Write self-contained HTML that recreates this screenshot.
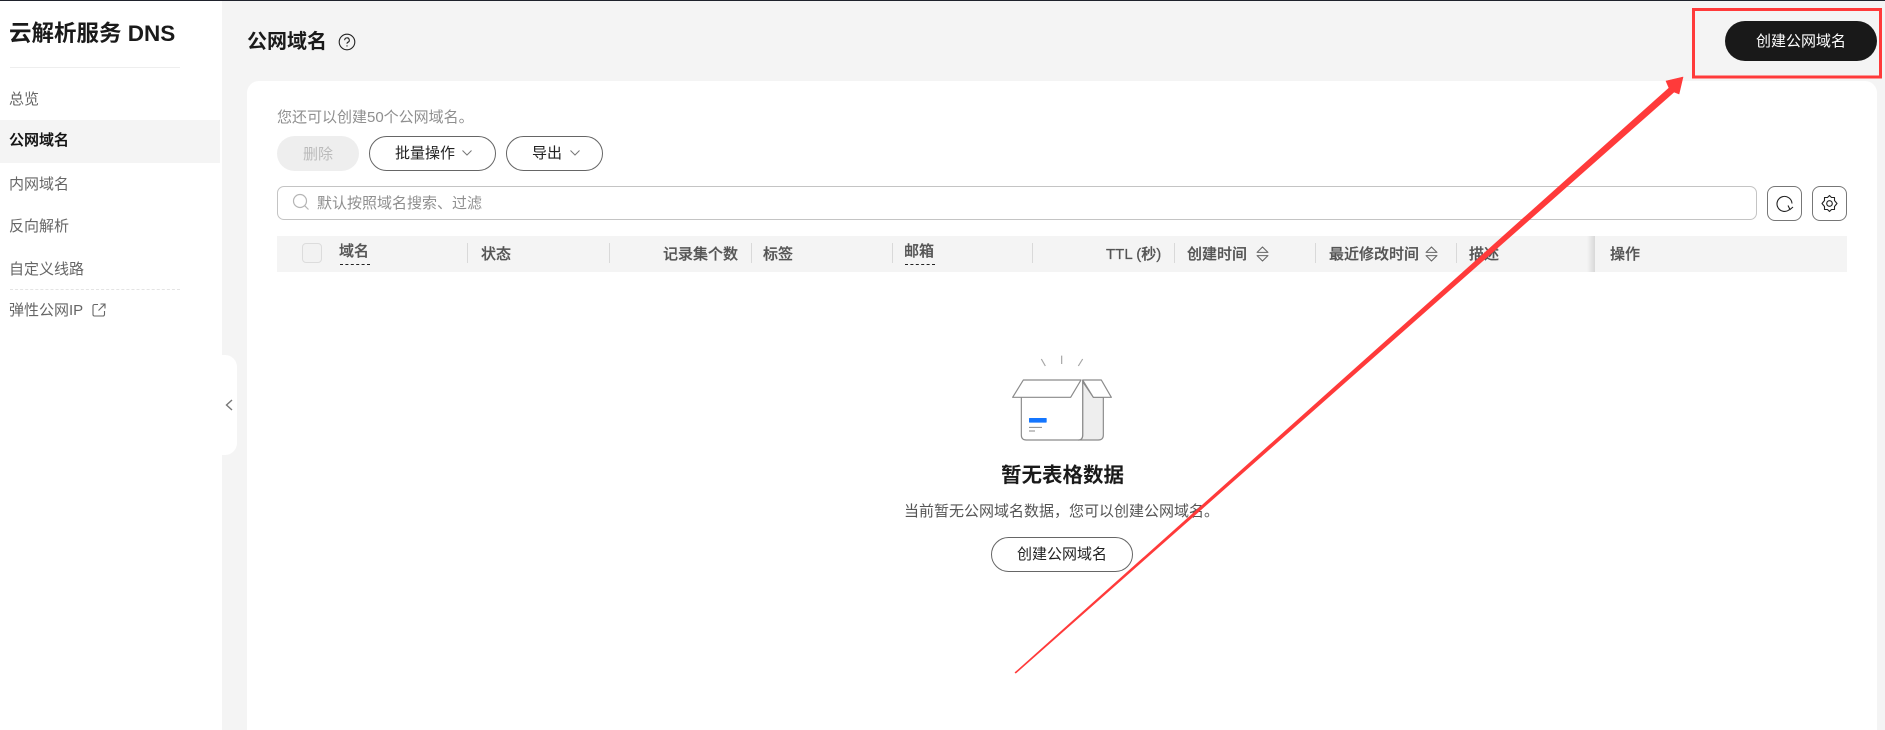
<!DOCTYPE html>
<html lang="zh-CN"><head><meta charset="utf-8"><title>云解析服务 DNS</title>
<style>
*{box-sizing:border-box;margin:0;padding:0}
html,body{width:1885px;height:730px;overflow:hidden;background:#f4f4f4}
body{position:relative;font-family:"Liberation Sans","Noto Sans CJK SC",sans-serif;font-size:15px;color:#222}
.a,.t{position:absolute}
.t{white-space:nowrap;line-height:20px;height:20px}
.nav{color:#666;left:9px}
.th{color:#555;font-weight:500;top:245px;-webkit-text-stroke:.25px #555}
.sep{position:absolute;top:243px;width:1px;height:20px;background:#d9d9d9}
.btn{position:absolute;border:1px solid #666;border-radius:18px;background:#fff;height:35px;line-height:34px;color:#222}
svg{position:absolute;overflow:visible}
</style></head><body>
<div class="a" style="left:0;top:0;width:1885px;height:1px;background:#1f222c;z-index:5"></div>
<div class="a" style="left:0;top:0;width:222px;height:730px;background:#fff"></div>
<div class="t" style="left:9px;top:21px;height:26px;line-height:26px;font-size:22.500px;font-weight:700;color:#1a1a1a">云解析服务 DNS</div>
<div class="a" style="left:10px;top:67px;width:170px;height:1px;background:#eee"></div>
<div class="t nav" style="top:90px">总览</div>
<div class="a" style="left:0;top:120px;width:220px;height:43px;background:#f4f4f4"></div>
<div class="t nav" style="top:131px;color:#111;font-weight:500;-webkit-text-stroke:.25px #111">公网域名</div>
<div class="t nav" style="top:175px">内网域名</div>
<div class="t nav" style="top:217px">反向解析</div>
<div class="t nav" style="top:260px">自定义线路</div>
<div class="a" style="left:10px;top:289px;width:170px;border-top:1px dashed #e4e4e4"></div>
<div class="t nav" style="top:301px">弹性公网IP</div>
<svg style="left:92px;top:303px" width="14" height="14" viewBox="0 0 14 14" fill="none" stroke="#666" stroke-width="1.100"><path d="M6 1.500H2.500A1.500 1.500 0 0 0 1 3v8.500A1.500 1.500 0 0 0 2.500 13H11a1.500 1.500 0 0 0 1.500-1.500V8M8.500 1H13V5.500M13 1L6.500 7.500"/></svg>
<div class="a" style="left:222px;top:355px;width:15px;height:100px;background:#fff;border-radius:0 12px 12px 0"></div>
<svg style="left:225px;top:399px" width="8" height="12" viewBox="0 0 8 12" fill="none" stroke="#777" stroke-width="1.400"><path d="M7 1L1.500 6L7 11"/></svg>

<div class="t" style="left:247px;top:30px;height:24px;line-height:24px;font-size:20px;font-weight:700;color:#1a1a1a">公网域名</div>
<svg style="left:338px;top:33px" width="18" height="18" viewBox="0 0 18 18" fill="none" stroke="#222" stroke-width="1.100"><circle cx="9" cy="9" r="7.800"/><path d="M6.700 7.200A2.300 2.300 0 1 1 9.800 9.300C9.200 9.600 9 10 9 10.800"/><path d="M9 12.300v1.200"/></svg>

<div class="a" style="left:1725px;top:21px;width:152px;height:40px;border-radius:20px;background:#191919;color:#fff;text-align:center;line-height:41px">创建公网域名</div>

<div class="a" style="left:247px;top:81px;width:1630px;height:660px;background:#fff;border-radius:12px 12px 0 0"></div>
<div class="t" style="left:277px;top:108px;color:#8f8f8f">您还可以创建50个公网域名。</div>
<div class="a" style="left:277px;top:136px;width:82px;height:35px;border-radius:18px;background:#eee;color:#bbb;text-align:center;line-height:37px">删除</div>
<div class="btn" style="left:369px;top:136px;width:127px;padding-left:25px">批量操作</div>
<svg style="left:462px;top:150px" width="10" height="6" viewBox="0 0 10 6" fill="none" stroke="#777"><path d="M.5.500L5 5L9.500.500"/></svg>
<div class="btn" style="left:506px;top:136px;width:97px;padding-left:25px">导出</div>
<svg style="left:570px;top:150px" width="10" height="6" viewBox="0 0 10 6" fill="none" stroke="#777"><path d="M.5.500L5 5L9.500.500"/></svg>

<div class="a" style="left:277px;top:186px;width:1480px;height:34px;border:1px solid #c4c4c4;border-radius:7px;background:#fff"></div>
<svg style="left:292px;top:193px" width="18" height="18" viewBox="0 0 18 18" fill="none" stroke="#b5b5b5" stroke-width="1.200"><circle cx="8" cy="8" r="6.500"/><path d="M12.800 12.800L16.500 16.500"/></svg>
<div class="t" style="left:317px;top:194px;color:#8f8f8f">默认按照域名搜索、过滤</div>
<div class="a" style="left:1767px;top:186px;width:35px;height:35px;border:1px solid #777;border-radius:8px;background:#fff"></div>
<svg style="left:1775px;top:194px" width="19" height="19" viewBox="0 0 19 19" fill="none" stroke="#222" stroke-width="1.100"><path d="M14.500 15.500A7.500 7.500 0 1 1 17 9.500"/><path d="M13 11.500L15 15.500L18 13"/></svg>
<div class="a" style="left:1812px;top:186px;width:35px;height:35px;border:1px solid #777;border-radius:8px;background:#fff"></div>
<svg style="left:1820px;top:194px" width="19" height="19" viewBox="0 0 19 19" fill="none" stroke="#222" stroke-width="1.100"><path d="M9.500 1.500L11.500 3.500H14.500V6.500L17 9.500L14.500 12.500V15.500H11.500L9.500 17.500L7.500 15.500H4.500V12.500L2 9.500L4.500 6.500V3.500H7.500Z" stroke-linejoin="round"/><circle cx="9.500" cy="9.500" r="2.800"/></svg>

<div class="a" style="left:277px;top:236px;width:1570px;height:36px;background:#f4f4f4"></div>
<div class="a" style="left:302px;top:243px;width:20px;height:20px;border:1px solid #dcdcdc;border-radius:4px;background:#f2f2f2"></div>
<div class="t th" style="left:339px;top:242px">域名</div>
<div class="a" style="left:340px;top:264px;width:30px;border-top:1px dashed #222"></div>
<div class="sep" style="left:467px"></div>
<div class="t th" style="left:481px">状态</div>
<div class="sep" style="left:609px"></div>
<div class="t th" style="left:663px">记录集个数</div>
<div class="sep" style="left:751px"></div>
<div class="t th" style="left:763px">标签</div>
<div class="sep" style="left:892px"></div>
<div class="t th" style="left:904px;top:242px">邮箱</div>
<div class="a" style="left:905px;top:264px;width:30px;border-top:1px dashed #222"></div>
<div class="sep" style="left:1032px"></div>
<div class="t th" style="left:1106px">TTL (秒)</div>
<div class="sep" style="left:1174px"></div>
<div class="t th" style="left:1187px">创建时间</div>
<svg style="left:1256px;top:245px" width="13" height="18" viewBox="0 0 12 16" fill="none" stroke="#666"><path d="M1 6.500L6 1.500L11 6.500ZM1 9.500L6 14.500L11 9.500Z" stroke-linejoin="round"/></svg>
<div class="sep" style="left:1315px"></div>
<div class="t th" style="left:1329px">最近修改时间</div>
<svg style="left:1425px;top:245px" width="13" height="18" viewBox="0 0 12 16" fill="none" stroke="#666"><path d="M1 6.500L6 1.500L11 6.500ZM1 9.500L6 14.500L11 9.500Z" stroke-linejoin="round"/></svg>
<div class="sep" style="left:1456px"></div>
<div class="t th" style="left:1469px">描述</div>
<div class="a" style="left:1587px;top:236px;width:8px;height:36px;background:linear-gradient(90deg,#f4f4f4,#d8d8d8)"></div>
<div class="t th" style="left:1610px">操作</div>

<svg style="left:980px;top:340px" width="160" height="120" viewBox="0 0 480 360" fill="none" stroke="#8a8a8a" stroke-width="3.500" stroke-linejoin="round">
<path d="M184 57L196 78M245 47V72M308 57L295 78" stroke="#a5a5a5"/>
<path d="M308 125L340 172H370V285Q370 300 355 300H295Q308 300 308 285Z" fill="#eee"/>
<path d="M124 172V285Q124 300 139 300H295Q308 300 308 285V120" fill="#fff"/>
<path d="M130 120H303L272 172H98Z" fill="#fff"/>
<path d="M308 120H364L394 172H340Z" fill="#fff"/>
<rect x="147" y="234" width="53" height="14" rx="2" fill="#1476ff" stroke="none"/>
<path d="M147 262H186M147 273H165" stroke-width="3"/>
</svg>
<div class="t" style="left:1001px;top:463px;height:26px;line-height:26px;font-size:20.500px;font-weight:700;color:#1a1a1a">暂无表格数据</div>
<div class="t" style="left:904px;top:502px;color:#555">当前暂无公网域名数据，您可以创建公网域名。</div>
<div class="btn" style="left:991px;top:537px;width:142px;text-align:center">创建公网域名</div>

<svg style="left:0;top:0;z-index:9" width="1885" height="730" viewBox="0 0 1885 730">
<rect x="1693.500" y="9.500" width="187" height="67.500" fill="none" stroke="#ff3a3a" stroke-width="3"/>
<path d="M1015 672.500L1669 88L1666 81L1683 77L1679 94L1674 92L1015.800 673.200Z" fill="#ff3a3a" stroke="#ff3a3a" stroke-width=".6" stroke-linejoin="round"/>
</svg>
</body></html>
